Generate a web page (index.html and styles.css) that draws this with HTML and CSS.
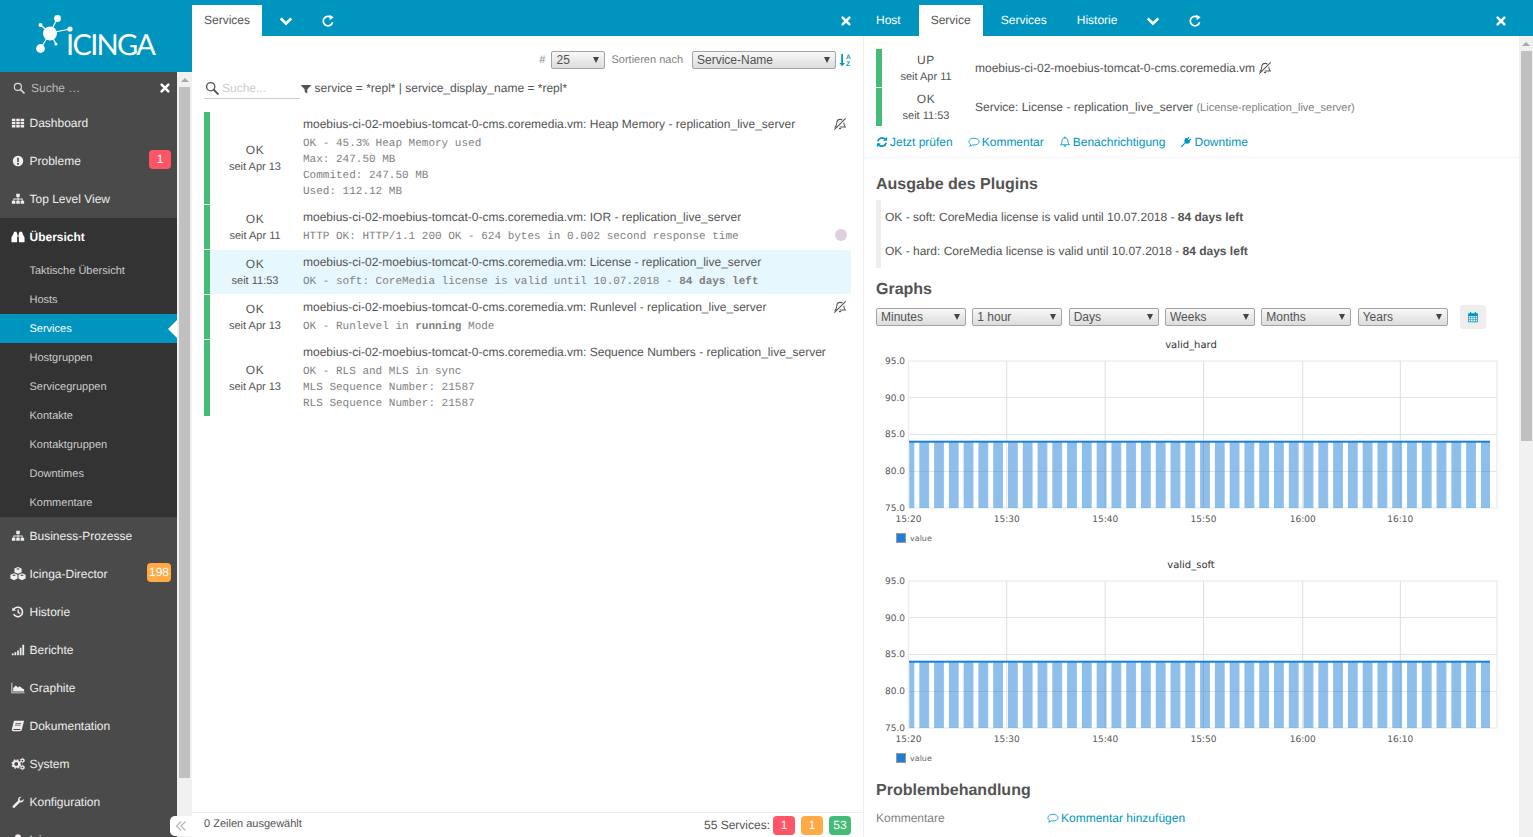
FILE: index.html
```html
<!DOCTYPE html>
<html lang="de">
<head>
<meta charset="utf-8">
<title>Icinga Web</title>
<link rel="stylesheet" href="styles.css">
</head>
<body>
<svg class="sprite" aria-hidden="true">
  <defs>
    <pattern id="bars" patternUnits="userSpaceOnUse" x="28.52" y="0" width="14.78" height="10"><rect width="9.8" height="10" fill="#1e7fd8" fill-opacity=".5"/></pattern>
  </defs>
  <symbol id="i-search" viewBox="0 0 16 16"><circle cx="6.5" cy="6.5" r="4.7" fill="none" stroke="currentColor" stroke-width="1.5"/><path d="M10 10l4.7 4.7" stroke="currentColor" stroke-width="2.2" stroke-linecap="round"/></symbol>
  <symbol id="i-close" viewBox="0 0 16 16"><path d="M3.5 3.5l9 9M12.5 3.5l-9 9" stroke="currentColor" stroke-width="3.4" stroke-linecap="round"/></symbol>
  <symbol id="i-grid" viewBox="0 0 16 16"><path fill="currentColor" d="M1 3h4v2.8H1zM6 3h4v2.8H6zM11 3h4v2.8h-4zM1 6.6h4v2.8H1zM6 6.6h4v2.8H6zM11 6.6h4v2.8h-4zM1 10.2h4V13H1zM6 10.2h4V13H6zM11 10.2h4V13h-4z"/></symbol>
  <symbol id="i-alert" viewBox="0 0 16 16"><path fill="currentColor" fill-rule="evenodd" d="M8 2a6 6 0 100 12A6 6 0 008 2zM7 4.4h2l-.2 5H7.2zM7 10.4h2v1.8H7z"/></symbol>
  <symbol id="i-sitemap" viewBox="0 0 16 16"><path fill="currentColor" d="M6 2h4v3.6H8.5V7.400h4.800V10H15v3.500h-4V10h1.300V8.500h-3.800V10H10v3.500H6V10h1.500V8.500H3.700V10H5v3.500H1V10h1.700V7.400h4.800V5.600H6z"/></symbol>
  <symbol id="i-bino" viewBox="0 0 16 16"><path fill="currentColor" d="M3.500 2h3v1.500H7v9.500c0 .6-.4 1-1 1H1.500c-.6 0-1-.4-1-1V9.500C.5 7 2.500 6 3 3.500zM9.500 2h3l.5 1.500C13.500 6 15.500 7 15.500 9.500V13c0 .6-.4 1-1 1H10c-.6 0-1-.4-1-1V3.500h.5zM7.500 5h1v3h-1z"/></symbol>
  <symbol id="i-cubes" viewBox="0 0 16 16"><path fill="currentColor" fill-rule="evenodd" d="M8 1l3.600 1.500v3.700L8 7.700 4.400 6.200V2.500zM8 2.200L6 3l2 .8 2-.8zM4 7.300l3.500 1.500v3.800L4 14.200.4 12.600V8.800zM4 8.500L2 9.300l2 .8 2-.8zM12 7.300l3.600 1.500v3.800L12 14.200l-3.500-1.600V8.800zM12 8.500l-2 .8 2 .8 2-.8z"/></symbol>
  <symbol id="i-history" viewBox="0 0 16 16"><path d="M3.200 5A5.400 5.400 0 113 10.500" fill="none" stroke="currentColor" stroke-width="1.800"/><path fill="currentColor" d="M1.500 2.800l4.200 3.400-4.200.6z"/><path d="M8.200 5v3.400l2.300 1.300" fill="none" stroke="currentColor" stroke-width="1.500"/></symbol>
  <symbol id="i-signal" viewBox="0 0 16 16"><path fill="currentColor" d="M1 12h2v2H1zM4 10.500h2V14H4zM7 8.500h2V14H7zM10 5.500h2V14h-2zM13 2h2v12h-2z"/></symbol>
  <symbol id="i-area" viewBox="0 0 16 16"><path fill="currentColor" d="M.5 2h1v11h14v1H.5zM2.500 12V8l3-3 2.500 2.500 2-1.500 3 2.500 2 1V12z"/></symbol>
  <symbol id="i-book" viewBox="0 0 16 16"><path fill="currentColor" fill-rule="evenodd" d="M4.500 2H15l-.4 1.500L12.400 12c-.3 1-1 2-2.400 2H2.500C1.300 14 .8 13 1 11.800L3 3.500C3.200 2.600 3.700 2 4.500 2zM5.200 4.500l-.2.800h6.500l.2-.8zM4.600 6.700l-.2.800h6.500l.2-.8zM2.800 11.500c-.3.700 0 1.200.6 1.200h6.800c.4 0 .7-.4.9-1.200z"/></symbol>
  <symbol id="i-cogs" viewBox="0 0 16 16"><circle cx="6" cy="8" r="3.300" fill="none" stroke="currentColor" stroke-width="2.200"/><circle cx="6" cy="8" r="4.700" fill="none" stroke="currentColor" stroke-width="1.600" stroke-dasharray="2 1.700"/><circle cx="13" cy="4" r="1.600" fill="none" stroke="currentColor" stroke-width="1.200"/><circle cx="13" cy="4" r="2.600" fill="none" stroke="currentColor" stroke-width="1" stroke-dasharray="1.300 1.400"/><circle cx="13" cy="12" r="1.600" fill="none" stroke="currentColor" stroke-width="1.200"/><circle cx="13" cy="12" r="2.600" fill="none" stroke="currentColor" stroke-width="1" stroke-dasharray="1.300 1.400"/></symbol>
  <symbol id="i-wrench" viewBox="0 0 16 16"><path fill="currentColor" d="M14.500 4.500c.6 2.200-1.600 4.600-4.200 3.800l-6 6c-.6.600-1.500.6-2.100 0-.6-.6-.6-1.500 0-2.100l6-6c-.8-2.600 1.600-4.800 3.800-4.200l-2.300 2.300.5 1.900 1.900.5z"/></symbol>
  <symbol id="i-user" viewBox="0 0 16 16"><circle cx="8" cy="5" r="3.500" fill="currentColor"/><path fill="currentColor" d="M2 14c0-3 2-5 6-5s6 2 6 5z"/></symbol>
  <symbol id="i-chev" viewBox="0 0 16 16"><path d="M2 5l6 6 6-6" fill="none" stroke="currentColor" stroke-width="3.200"/></symbol>
  <symbol id="i-reload" viewBox="0 0 16 16"><path d="M13.200 9.500A5.400 5.400 0 1110.500 3.300" fill="none" stroke="currentColor" stroke-width="2"/><path fill="currentColor" d="M9.500 .8l5 2.800-4.500 3.400z"/></symbol>
  <symbol id="i-muted" viewBox="0 0 16 16"><path d="M4.800 11.500H2.500c1.200-1.200 1.700-2.400 1.800-5 .1-2.400 1.800-3.800 3.800-3.800 1.100 0 2 .4 2.600 1M12.300 6.500c.2 2.300.7 3.800 1.700 5H7.500" fill="none" stroke="currentColor" stroke-width="1.200"/><path d="M1.500 14.500L14.500 1.500" stroke="currentColor" stroke-width="1.200"/><path fill="currentColor" d="M6.500 12.500h3c-.2 1-.8 1.500-1.500 1.500s-1.300-.5-1.500-1.500z"/></symbol>
  <symbol id="i-filter" viewBox="0 0 16 16"><path fill="currentColor" d="M1 2.500h14L9.700 8.500V14l-3.400-2V8.500z"/></symbol>
  <symbol id="i-sync" viewBox="0 0 16 16"><path d="M2.500 7A5.700 5.700 0 0112.200 4.200" fill="none" stroke="currentColor" stroke-width="2.400"/><path fill="currentColor" d="M14.800 1v5.300H9.500zM1.200 15V9.700h5.300z"/><path d="M13.500 9A5.700 5.700 0 013.800 11.800" fill="none" stroke="currentColor" stroke-width="2.400"/></symbol>
  <symbol id="i-comment" viewBox="0 0 16 16"><path d="M8 3c3.800 0 6.800 2 6.800 4.500S11.800 12 8 12c-.8 0-1.500-.1-2.100-.2-1 .9-2.300 1.500-3.900 1.700.8-.7 1.300-1.500 1.400-2.500C2 10.200 1.200 9 1.200 7.500 1.200 5 4.200 3 8 3z" fill="none" stroke="currentColor" stroke-width="1.100"/></symbol>
  <symbol id="i-bell" viewBox="0 0 16 16"><path d="M8 2.500c2.600 0 3.800 1.700 3.900 4 .1 2.600.8 4 2.100 5.200H2c1.300-1.200 2-2.600 2.100-5.200.1-2.300 1.300-4 3.900-4z" fill="none" stroke="currentColor" stroke-width="1.200"/><path fill="currentColor" d="M7 1h2v1.500H7zM6.300 12.500h3.400c-.2 1-.9 1.700-1.700 1.700s-1.500-.7-1.700-1.700z"/></symbol>
  <symbol id="i-plug" viewBox="0 0 16 16"><path fill="currentColor" d="M11.500 1l1.200 1.200-2.200 2.200 1.100 1.100 2.200-2.200L15 4.500l-2.200 2.200 1 1-.9.9c-1.800 1.800-4 2-5.500 1L5.700 11.300 4.500 12.500 2.500 15 1 13.500l2.500-2 1.200-1.200L6.400 8.600c-1-1.500-.8-3.700 1-5.500l.9-.9 1 1z"/></symbol>
  <symbol id="i-cal" viewBox="0 0 16 16"><path fill="currentColor" fill-rule="evenodd" d="M1.500 3H4V2c0-.6.3-1 .8-1s.8.4.8 1v1h4.800V2c0-.6.3-1 .8-1s.8.4.8 1v1h2.500v12h-13zM2.500 6.500V8h2V6.500zM5.200 6.500V8h2.400V6.500zM8.400 6.500V8h2.300V6.500zM11.500 6.500V8h2V6.500zM2.500 8.800v1.700h2V8.800zM5.200 8.800v1.700h2.400V8.800zM8.400 8.800v1.700h2.300V8.800zM11.500 8.800v1.700h2V8.800zM2.500 11.300V14h2v-2.700zM5.200 11.300V14h2.400v-2.700zM8.400 11.300V14h2.300v-2.700zM11.500 11.300V14h2v-2.700z"/></symbol>
</svg>

<div class="app">
  <aside class="sidebar">
    <div class="logo">
      <svg class="logo-art" width="192" height="72" viewBox="0 0 192 72">
        <g stroke="#fff" stroke-width="1.200"><path d="M50 33L57.500 18M50 33L70 29M50 33L41 48M50 33L40.500 25M50 33L56 44"/></g>
        <g fill="#fff"><circle cx="50" cy="33.500" r="7"/><circle cx="57.500" cy="18.500" r="3.400"/><circle cx="70" cy="29" r="2.600"/><circle cx="40.500" cy="48.500" r="4.400"/><circle cx="40.500" cy="25" r="2"/><circle cx="56" cy="44" r="1.600"/></g>
        <text class="logo-text" x="66" y="55" textLength="90" lengthAdjust="spacing">ICINGA</text>
      </svg>
    </div>
    <div class="side-body">
      <nav class="menu">
        <div class="menu-search">
          <svg class="ic-12 search-ic"><use href="#i-search"/></svg>
          <span class="menu-search-text">Suche …</span>
          <svg class="ic-12 white-ic"><use href="#i-close"/></svg>
        </div>
        <a class="item"><svg class="ic-14"><use href="#i-grid"/></svg>Dashboard</a>
        <a class="item"><svg class="ic-14"><use href="#i-alert"/></svg>Probleme<span class="badge badge-red menu-badge">1</span></a>
        <a class="item"><svg class="ic-14"><use href="#i-sitemap"/></svg>Top Level View</a>
        <div class="group">
          <a class="item item-open"><svg class="ic-14"><use href="#i-bino"/></svg>Übersicht</a>
          <a class="sub">Taktische Übersicht</a>
          <a class="sub">Hosts</a>
          <a class="sub sub-active">Services</a>
          <a class="sub">Hostgruppen</a>
          <a class="sub">Servicegruppen</a>
          <a class="sub">Kontakte</a>
          <a class="sub">Kontaktgruppen</a>
          <a class="sub">Downtimes</a>
          <a class="sub">Kommentare</a>
        </div>
        <a class="item"><svg class="ic-14"><use href="#i-sitemap"/></svg>Business-Prozesse</a>
        <a class="item"><svg class="ic-14 ic-wide"><use href="#i-cubes"/></svg>Icinga-Director<span class="badge badge-orange menu-badge">198</span></a>
        <a class="item"><svg class="ic-14"><use href="#i-history"/></svg>Historie</a>
        <a class="item"><svg class="ic-14"><use href="#i-signal"/></svg>Berichte</a>
        <a class="item"><svg class="ic-14"><use href="#i-area"/></svg>Graphite</a>
        <a class="item"><svg class="ic-14"><use href="#i-book"/></svg>Dokumentation</a>
        <a class="item"><svg class="ic-14"><use href="#i-cogs"/></svg>System</a>
        <a class="item"><svg class="ic-14"><use href="#i-wrench"/></svg>Konfiguration</a>
        <a class="item"><svg class="ic-14"><use href="#i-user"/></svg>Icinga</a>
      </nav>
      <div class="scrollbar side-scroll"><i class="scroll-up"></i><i class="scroll-thumb side-thumb"></i></div>
      <div class="collapse">
        <svg width="12" height="12" viewBox="0 0 12 12"><path d="M6 1.500L1.500 6 6 10.500M10.500 1.500L6 6l4.500 4.500" fill="none" stroke="#b5b5b5" stroke-width="1.200"/></svg>
      </div>
    </div>
  </aside>

  <main class="col col-left">
    <div class="tabs">
      <a class="tab tab-active">Services</a>
      <a class="tab tab-icon"><svg class="ic-14"><use href="#i-chev"/></svg></a>
      <a class="tab tab-icon"><svg class="ic-14"><use href="#i-reload"/></svg></a>
      <a class="tab-close"><svg class="ic-12"><use href="#i-close"/></svg></a>
    </div>
    <div class="list-view">
      <div class="controls">
        <span class="ctl-label">#</span>
        <label class="sel sel-limit"><select><option>25</option></select></label>
        <span class="ctl-label ctl-sort">Sortieren nach</span>
        <label class="sel sel-sort"><select><option>Service-Name</option></select></label>
        <svg class="ic-14 sort-ic" viewBox="0 0 16 16"><path fill="currentColor" d="M2.600 1h2v10.500h2.200L3.600 15 .4 11.500h2.200z"/><text x="8" y="6.500" class="sort-letter">A</text><text x="8" y="15" class="sort-letter">Z</text></svg>
      </div>
      <div class="filter-row">
        <div class="search-box">
          <svg class="ic-14 search-dark"><use href="#i-search"/></svg>
          <span class="search-ph">Suche...</span>
        </div>
        <svg class="ic-12 filter-ic"><use href="#i-filter"/></svg>
        <span class="filter-text">service = *repl* | service_display_name = *repl*</span>
      </div>
      <div class="table">
        <div class="row">
          <div class="state"><span class="state-name">OK</span><span class="state-since">seit Apr 13</span></div>
          <div class="row-body">
            <div class="row-title">moebius-ci-02-moebius-tomcat-0-cms.coremedia.vm: Heap Memory - replication_live_server</div>
            <div class="mono">OK - 45.3% Heap Memory used<br>Max: 247.50 MB<br>Commited: 247.50 MB<br>Used: 112.12 MB</div>
          </div>
          <svg class="ic-14 flag"><use href="#i-muted"/></svg>
        </div>
        <div class="row">
          <div class="state"><span class="state-name">OK</span><span class="state-since">seit Apr 11</span></div>
          <div class="row-body">
            <div class="row-title">moebius-ci-02-moebius-tomcat-0-cms.coremedia.vm: IOR - replication_live_server</div>
            <div class="mono">HTTP OK: HTTP/1.1 200 OK - 624 bytes in 0.002 second response time</div>
          </div>
          <span class="ack-dot"></span>
        </div>
        <div class="row row-selected">
          <div class="state"><span class="state-name">OK</span><span class="state-since">seit 11:53</span></div>
          <div class="row-body">
            <div class="row-title">moebius-ci-02-moebius-tomcat-0-cms.coremedia.vm: License - replication_live_server</div>
            <div class="mono">OK - soft: CoreMedia license is valid until 10.07.2018 - <b>84 days left</b></div>
          </div>
        </div>
        <div class="row">
          <div class="state"><span class="state-name">OK</span><span class="state-since">seit Apr 13</span></div>
          <div class="row-body">
            <div class="row-title">moebius-ci-02-moebius-tomcat-0-cms.coremedia.vm: Runlevel - replication_live_server</div>
            <div class="mono">OK - Runlevel in <b>running</b> Mode</div>
          </div>
          <svg class="ic-14 flag"><use href="#i-muted"/></svg>
        </div>
        <div class="row">
          <div class="state"><span class="state-name">OK</span><span class="state-since">seit Apr 13</span></div>
          <div class="row-body">
            <div class="row-title">moebius-ci-02-moebius-tomcat-0-cms.coremedia.vm: Sequence Numbers - replication_live_server</div>
            <div class="mono">OK - RLS and MLS in sync<br>MLS Sequence Number: 21587<br>RLS Sequence Number: 21587</div>
          </div>
        </div>
      </div>
    </div>
    <footer class="list-foot">
      <span class="selected-count">0 Zeilen ausgewählt</span>
      <span class="summary">55 Services:</span>
      <span class="badge badge-red">1</span>
      <span class="badge badge-orange">1</span>
      <span class="badge badge-green">53</span>
    </footer>
  </main>

  <section class="col col-right">
    <div class="tabs">
      <a class="tab">Host</a>
      <a class="tab tab-active">Service</a>
      <a class="tab">Services</a>
      <a class="tab">Historie</a>
      <a class="tab tab-icon"><svg class="ic-14"><use href="#i-chev"/></svg></a>
      <a class="tab tab-icon"><svg class="ic-14"><use href="#i-reload"/></svg></a>
      <a class="tab-close tab-close-right"><svg class="ic-12"><use href="#i-close"/></svg></a>
    </div>
    <div class="detail-wrap">
      <div class="detail">
        <header class="detail-head">
          <div class="head-row">
            <div class="state head-state"><span class="state-name">UP</span><span class="state-since">seit Apr 11</span></div>
            <div class="head-text">moebius-ci-02-moebius-tomcat-0-cms.coremedia.vm <svg class="ic-14 head-mute"><use href="#i-muted"/></svg></div>
          </div>
          <div class="head-row">
            <div class="state head-state"><span class="state-name">OK</span><span class="state-since">seit 11:53</span></div>
            <div class="head-text">Service: License - replication_live_server <small>(License-replication_live_server)</small></div>
          </div>
          <div class="actions">
            <a class="link"><svg class="ic-12"><use href="#i-sync"/></svg>Jetzt prüfen</a>
            <a class="link"><svg class="ic-12"><use href="#i-comment"/></svg>Kommentar</a>
            <a class="link"><svg class="ic-12"><use href="#i-bell"/></svg>Benachrichtigung</a>
            <a class="link"><svg class="ic-12"><use href="#i-plug"/></svg>Downtime</a>
          </div>
        </header>
        <div class="section">
          <h2 class="h-first">Ausgabe des Plugins</h2>
          <div class="plugin">
            <p>OK - soft: CoreMedia license is valid until 10.07.2018 - <b>84 days left</b></p>
            <p>OK - hard: CoreMedia license is valid until 10.07.2018 - <b>84 days left</b></p>
          </div>
          <h2 class="h-graphs">Graphs</h2>
          <div class="graph-ctl">
            <label class="sel sel-graph"><select><option>Minutes</option></select></label>
            <label class="sel sel-graph"><select><option>1 hour</option></select></label>
            <label class="sel sel-graph"><select><option>Days</option></select></label>
            <label class="sel sel-graph"><select><option>Weeks</option></select></label>
            <label class="sel sel-graph"><select><option>Months</option></select></label>
            <label class="sel sel-graph"><select><option>Years</option></select></label>
            <button class="cal-btn"><svg class="ic-12"><use href="#i-cal"/></svg></button>
          </div>
          <svg class="chart chart-first" width="630" height="220" viewBox="0 0 630 220">
            <text class="chart-title" x="315" y="12">valid_hard</text>
            <rect class="plot" x="32.500" y="25" width="588.500" height="147"/>
            <path class="grid-h" d="M33 61.500H621M33 98.500H621M33 135.500H621"/>
            <path class="grid-v" d="M130.700 25V172M229.200 25V172M327.500 25V172M426.700 25V172M524.300 25V172"/>
            <rect x="33.300" y="106" width="580.700" height="66" fill="url(#bars)"/>
            <rect x="33" y="104.700" width="581" height="2" fill="#1e7fd8"/>
            <g class="ticks-y"><text x="29" y="28">95.0</text><text x="29" y="64.500">90.0</text><text x="29" y="101">85.0</text><text x="29" y="138">80.0</text><text x="29" y="175">75.0</text></g>
            <g class="ticks-x"><text x="32.500" y="186">15:20</text><text x="130.700" y="186">15:30</text><text x="229.200" y="186">15:40</text><text x="327.500" y="186">15:50</text><text x="426.700" y="186">16:00</text><text x="524.300" y="186">16:10</text></g>
            <rect x="20.500" y="197.500" width="9" height="9" fill="#1e7fd8" stroke="#999"/>
            <text class="legend" x="34" y="204.500">value</text>
          </svg>
          <svg class="chart" width="630" height="220" viewBox="0 0 630 220">
            <text class="chart-title" x="315" y="12">valid_soft</text>
            <rect class="plot" x="32.500" y="25" width="588.500" height="147"/>
            <path class="grid-h" d="M33 61.500H621M33 98.500H621M33 135.500H621"/>
            <path class="grid-v" d="M130.700 25V172M229.200 25V172M327.500 25V172M426.700 25V172M524.300 25V172"/>
            <rect x="33.300" y="106" width="580.700" height="66" fill="url(#bars)"/>
            <rect x="33" y="104.700" width="581" height="2" fill="#1e7fd8"/>
            <g class="ticks-y"><text x="29" y="28">95.0</text><text x="29" y="64.500">90.0</text><text x="29" y="101">85.0</text><text x="29" y="138">80.0</text><text x="29" y="175">75.0</text></g>
            <g class="ticks-x"><text x="32.500" y="186">15:20</text><text x="130.700" y="186">15:30</text><text x="229.200" y="186">15:40</text><text x="327.500" y="186">15:50</text><text x="426.700" y="186">16:00</text><text x="524.300" y="186">16:10</text></g>
            <rect x="20.500" y="197.500" width="9" height="9" fill="#1e7fd8" stroke="#999"/>
            <text class="legend" x="34" y="204.500">value</text>
          </svg>
          <h2 class="h-problem">Problembehandlung</h2>
          <div class="kv kv-first"><span class="kv-key">Kommentare</span><a class="link"><svg class="ic-12"><use href="#i-comment"/></svg>Kommentar hinzufügen</a></div>
          <div class="kv"><span class="kv-key"></span><a class="link"><svg class="ic-12"><use href="#i-plug"/></svg></a></div>
        </div>
      </div>
      <div class="scrollbar detail-scroll"><i class="scroll-up"></i><i class="scroll-thumb detail-thumb"></i></div>
    </div>
  </section>
</div>
</body>
</html>
```

FILE: styles.css
```css
* { box-sizing: border-box; }
html, body { margin: 0; height: 100%; overflow: hidden; }
body { font: 12px/16px "Liberation Sans", Arial, sans-serif; color: #535353; background: #fff; text-rendering: geometricPrecision; }
.sprite { position: absolute; width: 0; height: 0; overflow: hidden; }
.sort-letter { font: bold 7.5px "Liberation Sans", sans-serif; fill: currentColor; }
.app { display: flex; height: 837px; }
svg { flex: none; }
.ic-12 { width: 12px; height: 12px; }
.ic-14 { width: 14px; height: 14px; }

/* Sidebar */
.sidebar { width: 192px; flex: none; display: flex; flex-direction: column; position: relative; }
.logo { height: 72px; background: #0095bf; flex: none; }
.logo-art { display: block; }
.logo-text { font: 400 29px Lato, sans-serif; fill: #fff; }
.side-body { flex: 1; display: flex; min-height: 0; position: relative; }
.menu { width: 177px; background: #4a4a4a; overflow: hidden; color: #eee; }
.menu-search { height: 32px; display: flex; align-items: center; padding: 0 6px 0 13px; }
.search-ic { color: #ddd; }
.white-ic { color: #fff; }
.menu-search-text { flex: 1; margin-left: 6px; color: #bbb; }
.item { height: 38px; display: flex; align-items: center; padding-left: 11px; color: #eee; }
.item .ic-14 { margin-right: 4.5px; color: #eee; }
.item .ic-wide { width: 16px; height: 16px; margin-left: -1.500px; margin-right: 4px; }
.group { background: #333; height: 299px; }
.item-open { font-weight: 700; color: #fff; }
.item-open .ic-14 { color: #fff; }
.sub { height: 29px; display: flex; align-items: center; padding-left: 29.500px; font-size: 11px; color: #ccc; position: relative; }
.sub-active { background: #0095bf; color: #fff; }
.sub-active::after { content: ""; position: absolute; right: -1px; top: 4.500px; border: 10px solid transparent; border-left-width: 0; border-right-color: #fff; }
.menu-badge { margin-left: auto; margin-right: 6px; margin-bottom: 3px; }
.badge { display: inline-block; min-width: 22px; height: 19px; padding: 0 2px; border-radius: 4px; color: #fff; text-align: center; font-size: 12px; line-height: 19px; }
.badge-red { background: #ff5566; }
.badge-orange { background: #ffaa44; }
.badge-green { background: #44bb77; }
.scrollbar { background: #f1f1f1; display: flex; flex-direction: column; align-items: center; flex: none; }
.side-scroll { width: 15px; }
.scroll-up { width: 0; height: 0; margin-top: 6px; border: 4px solid transparent; border-top: 0; border-bottom: 4px solid #a8a8a8; }
.scroll-thumb { display: block; background: #c0c0c0; width: 11px; }
.side-thumb { margin-top: 5px; height: 691px; }
.collapse { position: absolute; right: 0; bottom: 1px; width: 22px; height: 20px; background: #fff; border-radius: 5px 0 0 5px; display: flex; align-items: center; justify-content: center; }

/* Columns */
.col { display: flex; flex-direction: column; min-width: 0; height: 100%; }
.col-left { width: 672px; flex: none; border-right: 1px solid #eee; }
.col-right { flex: 1; }
.tabs { height: 36px; flex: none; background: #0095bf; display: flex; gap: 6px; padding-top: 5px; margin-right: 0; color: #fff; }
.col-left .tabs { margin-right: -1px; }
.tab { padding: 0 12px; line-height: 31px; color: #fff; display: flex; align-items: center; }
.tab-active { background: #fff; color: #535353; }
.tab-icon { width: 36px; justify-content: center; padding: 0; }
.tab-close { margin-left: auto; width: 36px; display: flex; align-items: center; justify-content: center; color: #fff; }
.tab-close-right { margin-right: 14px; }

/* List */
.list-view { flex: 1; padding: 0 12px; min-height: 0; }
.controls { display: flex; align-items: center; justify-content: flex-end; height: 18px; margin-top: 15px; font-size: 11px; }
.ctl-label { color: #7f7f7f; }
.ctl-sort { margin: 0 9px 0 6px; }
.sel { display: block; position: relative; flex: none; height: 18px; }
.sel select { appearance: none; display: block; width: 100%; height: 18px; margin: 0; padding: 0 0 0 4px; border: 1px solid #a3a3a3; border-radius: 2px; font: 12px "Liberation Sans", Arial, sans-serif; color: #535353; background: linear-gradient(#f8f8f8, #dcdcdc); outline: 0; }
.sel::after { content: ""; position: absolute; right: 6px; top: 6px; border: 3.500px solid transparent; border-bottom: 0; border-top: 6px solid #444; pointer-events: none; }
.sel-limit { width: 54px; margin-left: 6px; }
.sel-sort { width: 144px; }
.sort-ic { margin-left: 3px; margin-right: -2px; color: #0095bf; }
.filter-row { display: flex; align-items: center; margin-top: 9px; height: 21px; }
.search-box { width: 96px; height: 21px; border-bottom: 1px solid #ccc; display: flex; align-items: center; }
.search-dark { margin-left: 1px; color: #535353; }
.search-ph { margin-left: 3px; color: #ccc; }
.filter-ic { margin: 0 3px 0 -0.500px; color: #535353; }
.filter-text { padding-bottom: 2px; }
.table { margin-top: 13px; display: flex; flex-direction: column; gap: 1px; }
.row { display: flex; align-items: flex-start; border-left: 6px solid #44bb77; }
.row-selected { background: #e6f8fe; }
.state { width: 90px; align-self: center; flex: none; display: flex; flex-direction: column; align-items: center; font-size: 11px; }
.state-name { font-size: 12px; letter-spacing: .6px; }
.state-since { padding-top: 1px; margin-bottom: -1px; }
.row-body { flex: 1; padding: 4px 3px 4px; min-width: 0; }
.row-title { margin-bottom: 4px; white-space: nowrap; }
.mono { font: 11px/16px "Liberation Mono", "Courier New", monospace; color: #7f7f7f; white-space: nowrap; }
.flag { margin: 5px 4px 0 0; color: #535353; }
.ack-dot { width: 12px; height: 12px; border-radius: 50%; background: #e0cfe0; margin: 24px 4px 0 0; }
.list-foot { height: 25px; flex: none; border-top: 1px solid #eee; display: flex; align-items: flex-start; padding: 3px 12px 0; gap: 6px; }
.selected-count { margin-right: auto; font-size: 11px; line-height: 16px; }
.summary { margin-top: 1px; margin-right: -3px; }

/* Detail */
.detail-wrap { flex: 1; display: flex; min-height: 0; }
.detail { flex: 1; min-width: 0; overflow: hidden; }
.detail-scroll { width: 14px; }
.detail-thumb { margin-top: 5px; height: 390px; }
.detail-head { padding: 13px 12px 7px; border-bottom: 1px solid #f5f5f5; }
.head-row { display: flex; height: 38px; margin-bottom: 1px; border-left: 6px solid #44bb77; align-items: center; }
.head-state { width: 88px; }
.head-text { margin-left: 5px; display: flex; align-items: center; white-space: pre; }
.head-text small { font-size: 11px; color: #7f7f7f; padding-top: 1px; }
.head-mute { color: #535353; }
.actions { display: flex; gap: 15px; margin-top: 8px; }
.link { display: inline-flex; align-items: center; gap: 2px; color: #0095bf; }
.section { padding: 0 12px; }
h2 { margin: 0; font-size: 16px; line-height: 20px; font-weight: 700; color: #535353; }
.h-first { margin-top: 17px; }
.plugin { margin-top: 5px; padding: 9px 4px; border-left: 5px solid #eee; }
.plugin p { margin: 0; }
.plugin p + p { margin-top: 18px; }
.h-graphs { margin-top: 12px; }
.graph-ctl { display: flex; align-items: center; gap: 6.330px; height: 24px; margin-top: 5px; }
.sel-graph { width: 90px; }
.cal-btn { width: 26px; height: 24px; margin: 0 0 0 5.670px; padding: 0; border: 0; border-radius: 3px; background: #eee; color: #0095bf; display: flex; align-items: center; justify-content: center; }
.chart { display: block; }
.chart-first { margin-top: 7px; }
.chart-title { font: 10px "DejaVu Sans", sans-serif; text-anchor: middle; fill: #333; }
.plot { fill: #fff; stroke: #eee; stroke-width: 1.500; }
.grid-h { stroke: #e3e3e3; stroke-width: 1; fill: none; }
.grid-v { stroke: #dedede; stroke-width: 1; fill: none; }
.ticks-y text { font: 9px "DejaVu Sans", sans-serif; text-anchor: end; fill: #555; }
.ticks-x text { font: 9px "DejaVu Sans", sans-serif; text-anchor: middle; fill: #555; }
.legend { font: 8px "DejaVu Sans", sans-serif; fill: #666; }
.h-problem { margin-top: 5px; }
.kv { display: flex; margin-top: 8px; height: 16px; }
.kv-first { margin-top: 9px; }
.kv-key { width: 171px; color: #7f7f7f; }
```
